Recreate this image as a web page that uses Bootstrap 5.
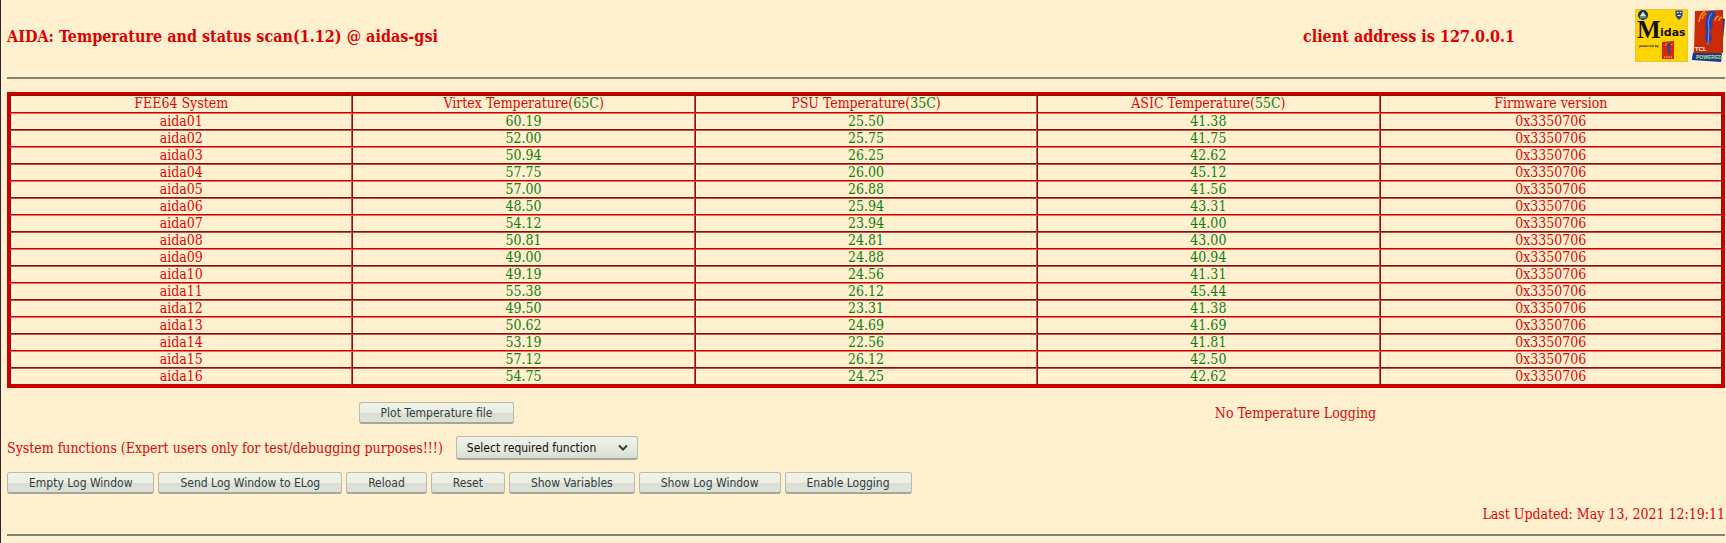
<!DOCTYPE html>
<html lang="en">
<head>
<meta charset="utf-8">
<meta name="viewport" content="width=device-width, initial-scale=1">
<title>AIDA: Temperature and status scan</title>
<link rel="stylesheet" href="https://cdn.jsdelivr.net/npm/bootstrap@5.3.0/dist/css/bootstrap.min.css">
<style>
body{background:#fff0cf;color:#d90808;font:14px/16px "DejaVu Serif Condensed","DejaVu Serif",serif;border-left:1px solid #2a2a30}
main{padding:0 1px 0 6px}
.topbar{padding:8px 0 14px}
.topbar h1,.client{font-size:16px;font-weight:700;line-height:20px;margin:0;padding-top:2px;color:#dd0000}
.client{margin-right:120px}
.logos{gap:4px}
.rule{margin:0;border:0;border-top:2px solid #808272;opacity:1}
.scan{margin:13px 0 14px;border:3px solid #cc0000;border-collapse:separate;border-spacing:0;table-layout:fixed;width:100%;text-align:center;line-height:15px}
.scan th,.scan td{font-weight:400;padding:0;border:1px solid;border-color:#b85048 #c4584e #8b1010 #900c10}
.scan th{border-top-color:#8b1010;border-bottom-color:#d40000;padding-bottom:1px}
.scan tbody tr:nth-child(odd) td{border-top-color:#e8705f}
.scan tbody tr:nth-child(even) td{border-bottom-color:#d40000}
.scan tr :last-child{border-right-color:#900c10}
.scan tbody tr:last-child td{border-bottom-color:#cc0000}
.scan .ok,.scan td:nth-child(n+2):nth-child(-n+4){color:#108010}
.stack{gap:12px}
.gtk,.pick{font:12px/14px "DejaVu Sans Condensed","DejaVu Sans",sans-serif;color:#2e3f42;border:1px solid #b9bbae;border-bottom:2px solid #a4a79c;border-radius:3px;height:22px}
.gtk{padding:0 21px;background:linear-gradient(#f1f4ea 0,#eaeee3 50%,#d9ddd2 51%,#dee2d8 100%)}
.pick{width:182px;height:24px;padding:0 10px;color:#111;appearance:none;background:linear-gradient(#f1f4ea,#e6eae0 50%,#d9ddd2)}
.pickbox{margin-left:13px}
.pickbox svg{position:absolute;right:10px;top:8px;pointer-events:none}
.bar{gap:4px}
</style>
<script src="https://cdn.jsdelivr.net/npm/bootstrap@5.3.0/dist/js/bootstrap.bundle.min.js"></script>
</head>
<body class="min-vh-100">
<main>
<header class="topbar d-flex align-items-center">
<h1 class="me-auto">AIDA: Temperature and status scan(1.12) @ aidas-gsi</h1>
<div class="client">client address is 127.0.0.1</div>
<div class="logos d-flex">
<a href="#" class="d-flex" aria-label="Midas"><svg width="53" height="55" viewBox="0 0 53 55">
<rect y="1" width="53" height="53" fill="#ffd500"/>
<rect x=".5" y="1.500" width="52" height="52" fill="none" stroke="#e8c43a"/>
<circle cx="8" cy="7" r="5" fill="#12304f"/><path d="M4.500 8.500L8 3.500l3.500 5z" fill="#d6e4e8"/><path d="M5 9.800h6" stroke="#8fb0b8"/>
<path d="M40.500 2.500h7v5q-1 3-3.500 4.500q-2.500-1.500-3.500-4.500z" fill="#2d4d96"/><path d="M42 4.500h1.500M44.800 4.500h1.500M42.500 7.500h3" stroke="#fff"/>
<text x="2" y="30" font-family="Liberation Serif,serif" font-weight="700" font-size="25" fill="#111">M</text>
<text x="25" y="28" font-family="DejaVu Sans,sans-serif" font-weight="700" font-size="11" fill="#111">idas</text>
<text x="4" y="39" font-family="DejaVu Sans,sans-serif" font-weight="700" font-size="3" fill="#222">powered by</text>
<path d="M27 34l12-1v18H27z" fill="#d22a08"/><path d="M34.500 35q-4 3-2 6l1 6q3-4 1-6q2-3 0-6z" fill="#3040a0"/><path d="M30 38l2-3M36 37l1.500-1" stroke="#ffb020"/>
<path d="M29 49h8" stroke="#ffc0a0" stroke-dasharray="1.500 .8"/>
</svg></a>
<a href="#" class="d-flex" aria-label="Tcl Powered"><svg width="33" height="55" viewBox="0 0 33 55">
<path d="M26 9l7 2-4 42L0 51l2-9z" fill="#1d3796"/>
<path d="M3 3l28-1 0 43H2z" fill="#cb2a04"/>
<path d="M1 45l29 1-1 8L0 52z" fill="#163a92"/>
<path d="M22 3q-7-2-8 8-2 7 0 12l-1 7 3 9q1-5 4-8l-2-7q4-5 2-11l4-6z" fill="#2540a8"/>
<path d="M20 5q-5 6-3 15l-1 17" fill="none" stroke="#8a98d8"/>
<path d="M7 14q1-8 6-11M10 11q1-4 4-6M23 13q0-4 4-5M27 13q0-3 3-4" fill="none" stroke="#f0902c" stroke-width="1.500"/>
<text x="3" y="43" font-family="Liberation Sans,sans-serif" font-weight="700" font-size="6" fill="#fff">TCL</text>
<text x="4" y="51" font-family="Liberation Sans,sans-serif" font-weight="700" font-size="5" fill="#c8e070">POWERED</text>
</svg></a>
</div>
</header>
<hr class="rule">
<table class="scan">
<thead><tr><th>FEE64 System</th><th>Virtex Temperature(<span class="ok">65C</span>)</th><th>PSU Temperature(<span class="ok">35C</span>)</th><th>ASIC Temperature(<span class="ok">55C</span>)</th><th>Firmware version</th></tr></thead>
<tbody>
<tr><td>aida01</td><td>60.19</td><td>25.50</td><td>41.38</td><td>0x3350706</td></tr>
<tr><td>aida02</td><td>52.00</td><td>25.75</td><td>41.75</td><td>0x3350706</td></tr>
<tr><td>aida03</td><td>50.94</td><td>26.25</td><td>42.62</td><td>0x3350706</td></tr>
<tr><td>aida04</td><td>57.75</td><td>26.00</td><td>45.12</td><td>0x3350706</td></tr>
<tr><td>aida05</td><td>57.00</td><td>26.88</td><td>41.56</td><td>0x3350706</td></tr>
<tr><td>aida06</td><td>48.50</td><td>25.94</td><td>43.31</td><td>0x3350706</td></tr>
<tr><td>aida07</td><td>54.12</td><td>23.94</td><td>44.00</td><td>0x3350706</td></tr>
<tr><td>aida08</td><td>50.81</td><td>24.81</td><td>43.00</td><td>0x3350706</td></tr>
<tr><td>aida09</td><td>49.00</td><td>24.88</td><td>40.94</td><td>0x3350706</td></tr>
<tr><td>aida10</td><td>49.19</td><td>24.56</td><td>41.31</td><td>0x3350706</td></tr>
<tr><td>aida11</td><td>55.38</td><td>26.12</td><td>45.44</td><td>0x3350706</td></tr>
<tr><td>aida12</td><td>49.50</td><td>23.31</td><td>41.38</td><td>0x3350706</td></tr>
<tr><td>aida13</td><td>50.62</td><td>24.69</td><td>41.69</td><td>0x3350706</td></tr>
<tr><td>aida14</td><td>53.19</td><td>22.56</td><td>41.81</td><td>0x3350706</td></tr>
<tr><td>aida15</td><td>57.12</td><td>26.12</td><td>42.50</td><td>0x3350706</td></tr>
<tr><td>aida16</td><td>54.75</td><td>24.25</td><td>42.62</td><td>0x3350706</td></tr>
</tbody>
</table>
<div class="stack d-flex flex-column">
<div class="row g-0 align-items-center text-center">
<div class="col-6"><button type="button" class="gtk">Plot Temperature file</button></div>
<div class="col-6">No Temperature Logging</div>
</div>
<div class="d-flex align-items-center">
<label for="fn">System functions (Expert users only for test/debugging purposes!!!)</label>
<div class="pickbox position-relative d-flex">
<select id="fn" class="pick"><option>Select required function</option></select>
<svg width="10" height="8" viewBox="0 0 10 8"><path d="M1 1.500l4 4 4-4" fill="none" stroke="#2e3f42" stroke-width="2"/></svg>
</div>
</div>
<div class="bar d-flex flex-wrap">
<button type="button" class="gtk">Empty Log Window</button>
<button type="button" class="gtk">Send Log Window to ELog</button>
<button type="button" class="gtk">Reload</button>
<button type="button" class="gtk">Reset</button>
<button type="button" class="gtk">Show Variables</button>
<button type="button" class="gtk">Show Log Window</button>
<button type="button" class="gtk">Enable Logging</button>
</div>
<div class="text-end">Last Updated: May 13, 2021 12:19:11</div>
<hr class="rule">
</div>
</main>
</body>
</html>
